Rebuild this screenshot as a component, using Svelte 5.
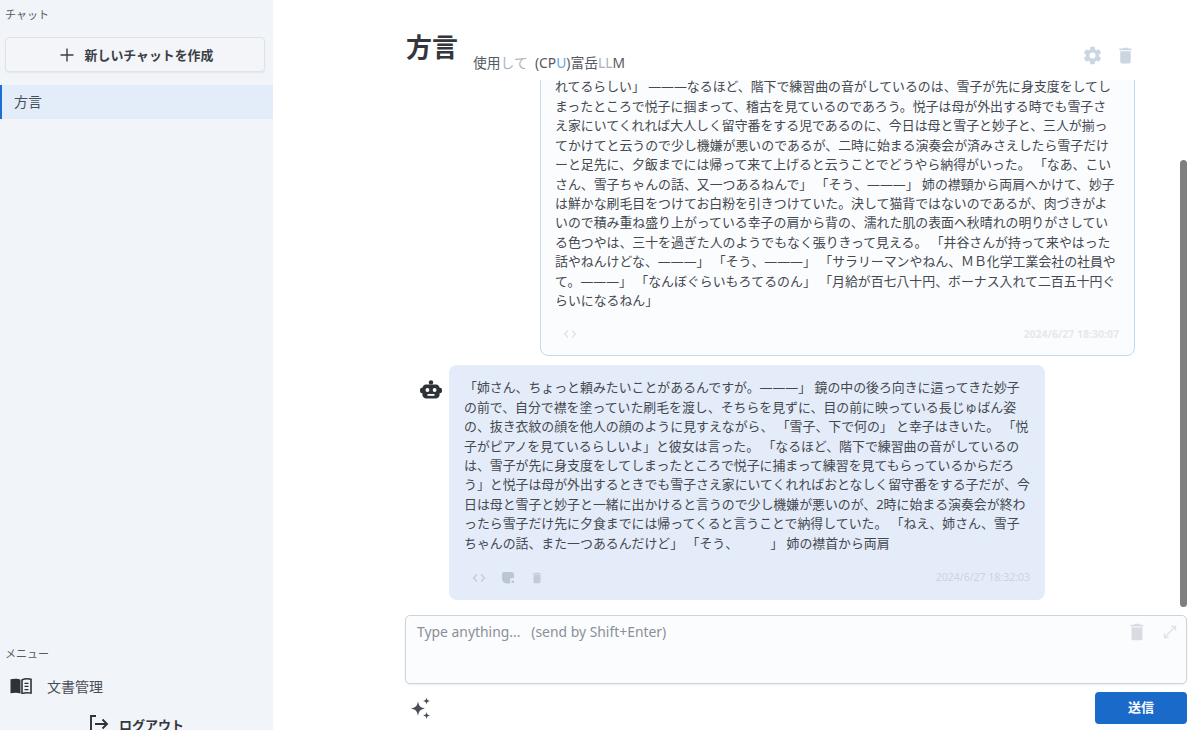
<script lang="ts">
	const userLines = [
		'れてるらしい」 ———なるほど、階下で練習曲の音がしているのは、雪子が先に身支度をしてし',
		'まったところで悦子に掴まって、稽古を見ているのであろう。悦子は母が外出する時でも雪子さ',
		'え家にいてくれれば大人しく留守番をする児であるのに、今日は母と雪子と妙子と、三人が揃っ',
		'てかけてと云うので少し機嫌が悪いのであるが、二時に始まる演奏会が済みさえしたら雪子だけ',
		'ーと足先に、夕飯までには帰って来て上げると云うことでどうやら納得がいった。 「なあ、こい',
		'さん、雪子ちゃんの話、又一つあるねんで」 「そう、———」 姉の襟頸から両肩へかけて、妙子',
		'は鮮かな刷毛目をつけてお白粉を引きつけていた。決して猫背ではないのであるが、肉づきがよ',
		'いので積み重ね盛り上がっている幸子の肩から背の、濡れた肌の表面へ秋晴れの明りがさしてい',
		'る色つやは、三十を過ぎた人のようでもなく張りきって見える。 「井谷さんが持って来やはった',
		'話やねんけどな、———」 「そう、———」 「サラリーマンやねん、ＭＢ化学工業会社の社員や',
		'て。———」 「なんぼぐらいもろてるのん」 「月給が百七八十円、ボーナス入れて二百五十円ぐ',
		'らいになるねん」'
	];

	const botLines = [
		'「姉さん、ちょっと頼みたいことがあるんですが。———」 鏡の中の後ろ向きに這ってきた妙子',
		'の前で、自分で襟を塗っていた刷毛を渡し、そちらを見ずに、目の前に映っている長じゅばん姿',
		'の、抜き衣紋の顔を他人の顔のように見すえながら、 「雪子、下で何の」 と幸子はきいた。 「悦',
		'子がピアノを見ているらしいよ」と彼女は言った。 「なるほど、階下で練習曲の音がしているの',
		'は、雪子が先に身支度をしてしまったところで悦子に捕まって練習を見てもらっているからだろ',
		'う」と悦子は母が外出するときでも雪子さえ家にいてくれればおとなしく留守番をする子だが、今',
		'日は母と雪子と妙子と一緒に出かけると言うので少し機嫌が悪いのが、2時に始まる演奏会が終わ',
		'ったら雪子だけ先に夕食までには帰ってくると言うことで納得していた。 「ねえ、姉さん、雪子',
		'ちゃんの話、また一つあるんだけど」 「そう、　　　」 姉の襟首から両肩'
	];

	const trash = 'M19,4H15.5L14.5,3H9.5L8.5,4H5V6H19M6,19A2,2 0 0,0 8,21H16A2,2 0 0,0 18,19V7H6V19Z';
	const cog =
		'M12,15.5A3.5,3.5 0 0,1 8.5,12A3.5,3.5 0 0,1 12,8.5A3.5,3.5 0 0,1 15.5,12A3.5,3.5 0 0,1 12,15.5M19.43,12.97C19.47,12.65 19.5,12.33 19.5,12C19.5,11.67 19.47,11.34 19.43,11L21.54,9.37C21.73,9.22 21.78,8.95 21.66,8.73L19.66,5.27C19.54,5.05 19.27,4.96 19.05,5.05L16.56,6.05C16.04,5.66 15.5,5.32 14.87,5.07L14.5,2.42C14.46,2.18 14.25,2 14,2H10C9.75,2 9.54,2.18 9.5,2.42L9.13,5.07C8.5,5.32 7.96,5.66 7.44,6.05L4.95,5.05C4.73,4.96 4.46,5.05 4.34,5.27L2.34,8.73C2.21,8.95 2.27,9.22 2.46,9.37L4.57,11C4.53,11.34 4.5,11.67 4.5,12C4.5,12.33 4.53,12.65 4.57,12.97L2.46,14.63C2.27,14.78 2.21,15.05 2.34,15.27L4.34,18.73C4.46,18.95 4.73,19.03 4.95,18.95L7.44,17.94C7.96,18.34 8.5,18.68 9.13,18.93L9.5,21.58C9.54,21.82 9.75,22 10,22H14C14.25,22 14.46,21.82 14.5,21.58L14.87,18.93C15.5,18.67 16.04,18.34 16.56,17.94L19.05,18.95C19.27,19.03 19.54,18.95 19.66,18.73L21.66,15.27C21.78,15.05 21.73,14.78 21.54,14.63L19.43,12.97Z';
</script>

<div class="app">
	<aside class="sidebar">
		<div class="label">チャット</div>
		<button class="new-chat">
			<svg width="16" height="16" viewBox="0 0 16 16"><path d="M8 1.5v13M1.5 8h13" stroke="#3a3f47" stroke-width="1.4" /></svg>
			<span>新しいチャットを作成</span>
		</button>
		<div class="chat-item">方言</div>

		<div class="menu">
			<div class="label">メニュー</div>
			<div class="menu-item">
				<svg width="22" height="16" viewBox="0 0 22 18" preserveAspectRatio="none">
					<path d="M0.5 1.5 C4 0.5 8 0.5 10.5 2 V17.5 C8 16.3 4 16.3 0.5 17.2Z" fill="#2f3338" />
					<path d="M12 2.2 C14.5 0.8 18 0.6 21 1.4 V17 C18 16.3 14.5 16.4 12 17.5Z" fill="none" stroke="#2f3338" stroke-width="1.6" />
					<path d="M14.5 6h4M14.5 9.5h4M14.5 13h4" stroke="#2f3338" stroke-width="1.4" />
				</svg>
				<span>文書管理</span>
			</div>
			<div class="logout">
				<svg width="20" height="20" viewBox="0 0 20 20" fill="none" stroke="#2f3338" stroke-width="1.9">
					<path d="M7 2H2v16h5" />
					<path d="M6 10h12M13.5 5.5 18 10l-4.5 4.5" />
				</svg>
				<span>ログアウト</span>
			</div>
		</div>
	</aside>

	<main class="main">
		<header class="head">
			<h1>方言</h1>
			<div class="model">使用<span class="fade">して</span>&nbsp; (CP<span class="blue">U</span>)富岳<span class="fade">LL</span>M</div>
			<div class="head-actions">
				<svg width="21" height="21" viewBox="0 0 24 24"><path d={cog} fill="#ccd6e2" /></svg>
				<svg width="21" height="21" viewBox="0 0 24 24"><path d={trash} fill="#ccd6e2" /></svg>
			</div>
		</header>

		<section class="messages">
			<div class="row user">
				<div class="bubble user-bubble">
					<div class="text">
						{#each userLines as line}
							<div>{line}</div>
						{/each}
					</div>
					<div class="foot">
						<div class="tools">
							<svg width="14" height="14" viewBox="0 0 14 14" fill="none" stroke="#dfe3e8" stroke-width="1.3"><path d="M5 3.5 1.5 7 5 10.5M9 3.5 12.5 7 9 10.5" /></svg>
						</div>
						<time class="faint">2024/6/27 18:30:07</time>
					</div>
				</div>
			</div>

			<div class="row bot">
				<svg class="avatar" width="22" height="20" viewBox="0 0 22 20">
					<circle cx="11" cy="2.4" r="2.2" fill="#2f3338" />
					<path d="M6 4.5h10a4 4 0 0 1 3.6 3.2h.4a2 2 0 0 1 2 2v1.6a2 2 0 0 1-2 2h-.5a4 4 0 0 1-3.5 5.2H6a4 4 0 0 1-3.5-5.2H2a2 2 0 0 1-2-2V9.7a2 2 0 0 1 2-2h.4A4 4 0 0 1 6 4.5Z" fill="#2f3338" />
					<circle cx="7.4" cy="10" r="1.9" fill="#fff" />
					<circle cx="14.6" cy="10" r="1.9" fill="#fff" />
					<rect x="7.5" y="14" width="7" height="1.8" fill="#fff" />
				</svg>
				<div class="bubble bot-bubble">
					<div class="text">
						{#each botLines as line}
							<div>{line}</div>
						{/each}
					</div>
					<div class="foot">
						<div class="tools">
							<svg width="14" height="14" viewBox="0 0 14 14" fill="none" stroke="#c3cbd8" stroke-width="1.3"><path d="M5 3.5 1.5 7 5 10.5M9 3.5 12.5 7 9 10.5" /></svg>
							<svg width="14" height="14" viewBox="0 0 14 14"><path d="M3 1h7a3 3 0 0 1 3 3v3h-2a2 2 0 0 0-2 2v3.5H6.500A5 5 0 0 1 1 8V3a2 2 0 0 1 2-2Z M10.500 9.500h2.500v2.500h-2.500z" fill="#bcc5d3" /></svg>
							<svg width="14" height="14" viewBox="0 0 24 24"><path d={trash} fill="#c3cbd8" /></svg>
						</div>
						<time class="faint bot-time">2024/6/27 18:32:03</time>
					</div>
				</div>
			</div>

			<div class="scrollbar"></div>
		</section>

		<div class="input">
			<textarea placeholder="Type anything...   (send by Shift+Enter)"></textarea>
			<div class="input-actions">
				<svg width="22" height="22" viewBox="0 0 24 24"><path d={trash} fill="#d8dbdf" /></svg>
				<svg width="14" height="14" viewBox="0 0 14 14" fill="none" stroke="#dfe2e6" stroke-width="1.4"><path d="M1.500 12.500 12.500 1.500M8.500 1.500h4v4M1.500 8.500v4h4" /></svg>
			</div>
		</div>

		<div class="send-row">
			<svg width="22" height="22" viewBox="0 0 22 22" fill="#4a4f57">
				<path d="M8 4.500 C9 9 10 10.500 15 11.500 C10 12.500 9 14 8 19 C7 14 6 12.500 1 11.500 C6 10.500 7 9 8 4.500Z" />
				<path d="M16.500 0.500 C17 2.800 17.500 3.500 20 4 C17.500 4.500 17 5.200 16.500 7.500 C16 5.200 15.500 4.500 13 4 C15.500 3.500 16 2.800 16.500 0.500Z" />
				<path d="M16.500 15 C17 17.300 17.500 18 20 18.500 C17.500 19 17 19.700 16.500 22 C16 19.700 15.500 19 13 18.500 C15.500 18 16 17.300 16.500 15Z" />
			</svg>
			<button class="send">送信</button>
		</div>
	</main>
</div>

<style>
	:global(body) {
		margin: 0;
		background: #fff;
		font-family: 'Noto Sans', 'Noto Sans CJK JP', sans-serif;
	}
	.app {
		display: flex;
		width: 1200px;
		height: 730px;
		overflow: hidden;
		color: #33373d;
	}
	.sidebar {
		width: 273px;
		height: 738px;
		flex-shrink: 0;
		background: #f1f4f9;
		display: flex;
		flex-direction: column;
		box-sizing: border-box;
		padding-top: 7px;
	}
	.label {
		font-size: 11px;
		line-height: 16px;
		color: #555a61;
		padding-left: 5px;
	}
	.new-chat {
		margin: 14px 8px 0 5px;
		height: 35px;
		display: flex;
		align-items: center;
		justify-content: center;
		gap: 10px;
		background: #f3f5f9;
		border: 1px solid #dfe3e8;
		border-radius: 4px;
		box-shadow: 0 1px 2px rgba(0, 0, 0, 0.06);
		font: 700 12.900px 'Noto Sans CJK JP', sans-serif;
		color: #3a3f47;
		padding: 0 0 0 2px;
	}
	.chat-item {
		margin-top: 13px;
		height: 34px;
		line-height: 34px;
		background: #e3ecf9;
		border-left: 2px solid #1a6fd0;
		padding-left: 12px;
		font-size: 14px;
		color: #4a4f57;
	}
	.menu {
		margin-top: auto;
	}
	.menu-item {
		display: flex;
		align-items: center;
		gap: 15px;
		height: 24px;
		margin-top: 12px;
		padding-left: 10px;
		font-size: 14px;
		color: #4a4f57;
	}
	.logout {
		display: flex;
		align-items: center;
		justify-content: center;
		gap: 10px;
		height: 20px;
		margin-top: 16px;
		padding-bottom: 4px;
		font-size: 13px;
		font-weight: 700;
		color: #33373d;
	}
	.main {
		flex: 1;
		min-width: 0;
		display: flex;
		flex-direction: column;
		padding: 0 13px 0 132px;
	}
	.head {
		height: 80px;
		flex-shrink: 0;
		display: flex;
		align-items: flex-start;
		padding-top: 29px;
		box-sizing: border-box;
	}
	h1 {
		margin: 0 0 0 1px;
		font-size: 26px;
		line-height: 36px;
		font-weight: 700;
		color: #33373d;
	}
	.model {
		margin: 24px 0 0 15px;
		font-size: 13.800px;
		line-height: 20px;
		color: #555a61;
	}
	.fade {
		color: #a9b2bd;
	}
	.blue {
		color: #6aa5dc;
	}
	.head-actions {
		margin: 16px 0 0 auto;
		display: flex;
		gap: 12px;
		padding-right: 51px;
	}
	.messages {
		position: relative;
		height: 527px;
		flex-shrink: 0;
		overflow: hidden;
		display: flex;
		flex-direction: column;
		justify-content: flex-end;
		gap: 9px;
		padding: 0 52px 7px 15px;
		box-sizing: border-box;
	}
	.row {
		display: flex;
		flex-shrink: 0;
	}
	.user {
		justify-content: flex-end;
	}
	.bot {
		gap: 7px;
		align-items: flex-start;
	}
	.avatar {
		margin-top: 15px;
		flex-shrink: 0;
	}
	.bubble {
		width: 596px;
		box-sizing: border-box;
		border-radius: 8px;
		padding: 13px 15px 0;
		font-size: 12.900px;
		line-height: 19.400px;
		color: #44484f;
	}
	.user-bubble {
		width: 595px;
		padding-left: 14px;
		background: #fbfcfe;
		border: 1px solid #bfd9ee;
	}
	.bot-bubble {
		background: #e5ecf9;
		flex-shrink: 0;
	}
	.text div {
		white-space: nowrap;
	}
	.foot {
		display: flex;
		align-items: center;
		justify-content: space-between;
		height: 47px;
		padding: 3px 0 0 8px;
		box-sizing: border-box;
	}
	.user-bubble .foot {
		height: 45px;
	}
	.tools {
		display: flex;
		gap: 15px;
		align-items: center;
	}
	.faint {
		font-size: 10.500px;
		color: #e6e8ec;
		font-weight: 700;
	}
	.bot-time {
		color: #ccd3df;
		font-weight: 400;
	}
	.scrollbar {
		position: absolute;
		right: 0;
		top: 80px;
		bottom: 0;
		width: 7px;
		border-radius: 4px;
		background: #7f7f7f;
	}
	.input {
		position: relative;
		margin-top: 8px;
		height: 69px;
		flex-shrink: 0;
	}
	textarea {
		display: block;
		width: 100%;
		height: 100%;
		box-sizing: border-box;
		resize: none;
		border: 1px solid #cfd4da;
		border-radius: 5px;
		background: #fbfcfe;
		padding: 6px 11px;
		font: 13.900px 'Noto Sans', sans-serif;
		box-shadow: 0 1px 2px rgba(0, 0, 0, 0.08);
	}
	textarea::placeholder {
		color: #8a8f98;
		opacity: 1;
	}
	.input-actions {
		position: absolute;
		top: 6px;
		right: 10px;
		display: flex;
		align-items: center;
		gap: 15px;
	}
	.send-row {
		display: flex;
		align-items: center;
		justify-content: space-between;
		margin-top: 8px;
		padding-left: 5px;
	}
	.send {
		width: 92px;
		height: 32px;
		border: 0;
		border-radius: 4px;
		background: #1a6bc9;
		color: #fff;
		font: 700 13px/30px 'Noto Sans CJK JP', sans-serif;
		padding: 0 0 2px;
	}
</style>
